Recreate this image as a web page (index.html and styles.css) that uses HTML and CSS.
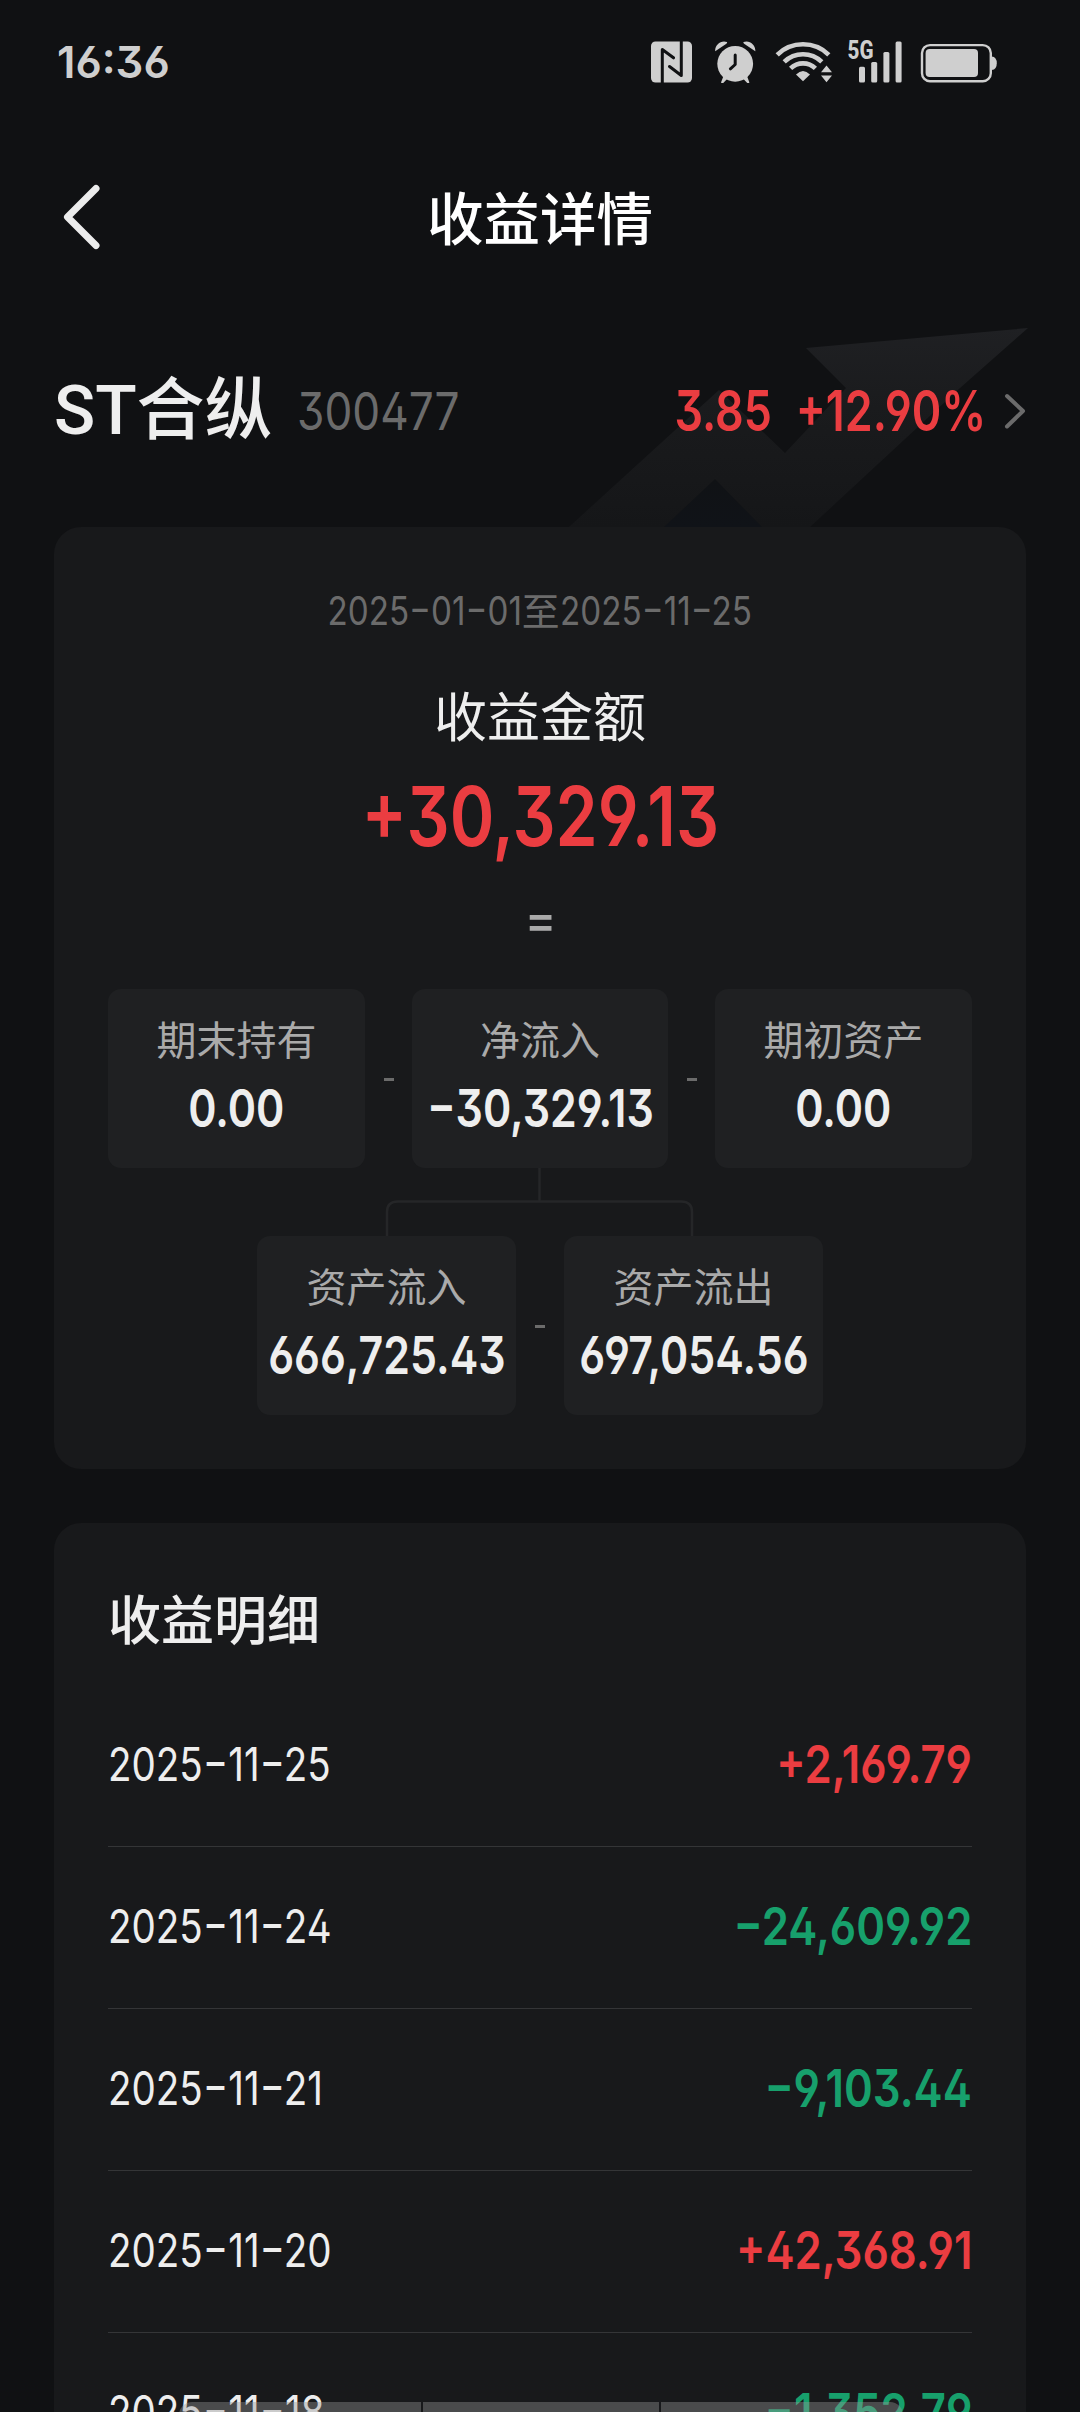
FILE: index.html
```html
<!DOCTYPE html>
<html lang="zh-CN">
<head>
<meta charset="utf-8">
<title>收益详情</title>
<link rel="stylesheet" href="styles.css">
</head>
<body>
<div class="screen">
  <div class="statusbar">
    <span class="num clock">16:36</span>
    <div class="status-icons">
      <svg class="nfc" width="41" height="42" viewBox="651 41 41 42"><rect x="651" y="41.5" width="41" height="41" rx="4.5"/><path class="cut" d="M662.3 84V49.5L673.5 57.8M681.3 40V75.5L669.5 66.5"/></svg>
      <svg class="alarm" width="41" height="42" viewBox="715 41 41 42"><circle cx="735.2" cy="63.8" r="17.9"/><path d="M715.2 51.2C714.6 45 721 39.6 727 42Q727.5 43.2 726 44ZM755.3 51.2C755.9 45 749.5 39.6 743.5 42Q743 43.2 744.5 44ZM723.5 76L721 82.5Q722 83.8 723.5 82.8L728 78ZM747 76L749.4 82.5Q748.4 83.8 747 82.8L742.5 78Z"/><path class="cut" d="M735.2 55V64.5L730.4 68.8"/></svg>
      <svg class="wifi" width="57" height="42" viewBox="775 41 57 42"><g class="arcs"><path d="M777.2 54.8A37 37 0 0 1 828.8 54.8"/><path d="M784.2 61.8A27 27 0 0 1 821.8 61.8"/><path d="M790.6 68.4A17.7 17.7 0 0 1 815.4 68.4"/></g><path d="M803 81.3L796 74.5Q803 67.5 810 74.5Z"/><path d="M826.5 65.5L832 72.2H821ZM826.5 82.3L832 75.6H821Z"/></svg>
      <svg class="signal" width="55" height="42" viewBox="848 41 55 42"><text class="net" x="847.5" y="59" textLength="26" lengthAdjust="spacingAndGlyphs">5G</text><rect x="859" y="66.7" width="6" height="15.8" rx="1.5"/><rect x="871.2" y="62" width="6" height="20.5" rx="1.5"/><rect x="883.4" y="52" width="6" height="30.5" rx="1.5"/><rect x="895.6" y="41.6" width="6" height="40.9" rx="1.5"/></svg>
      <svg class="battery" width="77" height="42" viewBox="920 41 77 42"><rect class="shell" x="922" y="45.1" width="68.8" height="36.2" rx="8"/><rect x="925.6" y="49" width="52.4" height="28" rx="4"/><path d="M991.7 56.5Q996.8 57 996.8 63.3T991.7 70.1Z"/></svg>
    </div>
  </div>

  <header class="navbar">
    <svg class="back" width="40" height="68" viewBox="62 183 40 68"><path d="M96 188.5L67.5 217L96 245.5"/></svg>
    <h1>收益详情</h1>
  </header>

  <section class="stock">
    <svg class="trend" width="480" height="220" viewBox="560 307 480 220">
      <defs>
        <linearGradient id="arrow" x1="0" y1="0" x2="0" y2="1"><stop offset="0" stop-color="#1f2023"/><stop offset=".4" stop-color="#1a1b1d"/><stop offset="1" stop-color="#151618"/></linearGradient>
        <linearGradient id="shade" x1="0" y1="0" x2="0" y2="1"><stop offset="0" stop-color="#101215"/><stop offset="1" stop-color="#101318"/></linearGradient>
      </defs>
      <path fill="url(#shade)" d="M715 479L762 527H664Z"/>
      <path fill="url(#arrow)" d="M1028 328L806 348L846 388L785 453L719 390L569 527H664L715 479L762 527H810L960 388Z"/>
    </svg>
    <span class="name">ST合纵</span>
    <span class="num code">300477</span>
    <span class="num price">3.85</span>
    <span class="num change">+12.90%</span>
    <svg class="more" width="22" height="38" viewBox="1004 393 22 38"><path d="M1007 397L1023 412L1007 427.5"/></svg>
  </section>

  <section class="card summary">
    <div class="range"><span class="num">2025−01−01<span class="to">至</span>2025−11−25</span></div>
    <div class="caption">收益金额</div>
    <div class="total"><span class="num">+30,329.13</span></div>
    <div class="equals">=</div>
    <div class="boxes">
      <div class="box"><span class="label">期末持有</span><span class="num value">0.00</span></div>
      <i class="minus"></i>
      <div class="box"><span class="label">净流入</span><span class="num value">−30,329.13</span></div>
      <i class="minus"></i>
      <div class="box"><span class="label">期初资产</span><span class="num value">0.00</span></div>
    </div>
    <svg class="branch" width="310" height="68" viewBox="0 0 310 68"><path d="M154.5 0V33.5M2 68V44Q2 33.5 13 33.5H296Q307 33.5 307 44V68"/></svg>
    <div class="boxes flows">
      <div class="box"><span class="label">资产流入</span><span class="num value">666,725.43</span></div>
      <i class="minus"></i>
      <div class="box"><span class="label">资产流出</span><span class="num value">697,054.56</span></div>
    </div>
  </section>

  <section class="card details">
    <h2>收益明细</h2>
    <ul>
      <li><span class="num date">2025−11−25</span><span class="num amount up">+2,169.79</span></li>
      <li><span class="num date">2025−11−24</span><span class="num amount down">−24,609.92</span></li>
      <li><span class="num date">2025−11−21</span><span class="num amount down">−9,103.44</span></li>
      <li><span class="num date">2025−11−20</span><span class="num amount up">+42,368.91</span></li>
      <li><span class="num date">2025−11−18</span><span class="num amount down">−1,352.79</span></li>
    </ul>
  </section>

  <div class="gesture"><i></i><i></i><i></i></div>
</div>
</body>
</html>
```

FILE: styles.css
```css
* { box-sizing: border-box; margin: 0; padding: 0; }

body {
  background: #101113;
  color: #eeeeee;
  font-family: "Noto Sans CJK SC", sans-serif;
}

.screen {
  position: relative;
  width: 1080px;
  height: 2412px;
  overflow: hidden;
}

/* Numerals: narrow digits with open 4, 6 and 9 */
.num {
  display: inline-block;
  font-family: Inter, "Noto Sans CJK SC", sans-serif;
  font-feature-settings: "ss01";
  white-space: nowrap;
  transform: scaleX(.83);
}

/* Status bar */
.statusbar {
  display: flex;
  justify-content: space-between;
  align-items: center;
  height: 124px;
  padding: 0 83px 0 57px;
  color: #cfcfcf;
}
.clock {
  font-size: 44px;
  font-weight: 600;
  line-height: 60px;
  transform: scaleX(.99);
  transform-origin: left;
}
.status-icons { display: flex; }
.status-icons svg { fill: #cfcfcf; }
.alarm { margin-left: 23px; }
.wifi { margin-left: 19px; }
.signal { margin-left: 16px; overflow: visible; }
.battery { margin-left: 17px; }
.cut { fill: none; stroke: #101113; stroke-width: 3; stroke-linejoin: round; stroke-linecap: round; }
.arcs { fill: none; stroke: #cfcfcf; stroke-width: 4.6; }
.shell { fill: none; stroke: #cfcfcf; stroke-width: 2.4; }
.net { font: 800 25px Roboto, sans-serif; }

/* Title bar */
.navbar {
  display: grid;
  grid-template-columns: 100px 1fr 100px;
  align-items: center;
  height: 184px;
  padding: 2px 62px 0;
}
.back { fill: none; stroke: #ececec; stroke-width: 7; stroke-linecap: round; stroke-linejoin: round; }
h1 {
  padding-bottom: 4px;
  color: #ffffff;
  font-size: 56.5px;
  font-weight: 500;
  line-height: 80px;
  text-align: center;
}

/* Stock header */
.stock {
  position: relative;
  display: flex;
  align-items: center;
  height: 219px;
  padding: 0 54px 13px;
}
.stock > span { position: relative; }
.trend { position: absolute; right: 40px; bottom: 0; }
.name {
  font-family: Roboto, "Noto Sans CJK SC", sans-serif;
  font-size: 68px;
  font-weight: 500;
  line-height: 90px;
}
.code {
  margin-left: 24px;
  color: #6b6b6b;
  font-size: 52px;
  font-weight: 400;
  transform: scaleX(.85);
  transform-origin: left;
}
.price, .change {
  color: #eb3d41;
  font-size: 56px;
  font-weight: 600;
  transform: scaleX(.8);
  transform-origin: right;
}
.price { margin-left: auto; }
.change { margin-left: -24px; }
.more { margin-left: 18px; fill: none; stroke: #6b6b6b; stroke-width: 4; stroke-linecap: round; stroke-linejoin: round; }

/* Cards */
.card {
  margin: 0 54px;
  padding: 0 54px;
  border-radius: 27px;
  background: #18191b;
}
.summary {
  display: flex;
  flex-direction: column;
  align-items: center;
  height: 942px;
  padding-top: 59px;
}
.range {
  display: flex;
  align-items: center;
  height: 50px;
  color: #6b6b6b;
  font-size: 40px;
  line-height: 50px;
}
.to {
  display: inline-block;
  padding: 0 4px;
  font-size: 38px;
  line-height: 40px;
  transform: scaleX(1.2);
}
.caption { margin-top: 43px; font-size: 53px; line-height: 70px; }
.total {
  display: flex;
  align-items: center;
  height: 90px;
  margin-top: 22px;
  color: #eb3d41;
  font-size: 83px;
  font-weight: 600;
  line-height: 90px;
}
.total .num { transform: scaleX(.815); }
.equals {
  margin: 38px 0 4px 2px;
  color: #aaaaaa;
  font: 500 50px/40px Inter, sans-serif;
  transform: scaleX(.95);
}

.boxes {
  display: grid;
  grid-template-columns: 257px 1fr 256px 1fr 257px;
  align-items: center;
  justify-items: center;
  width: 100%;
  margin-top: 46px;
}
.flows {
  grid-template-columns: 259px 48px 259px;
  justify-content: center;
  margin-top: 0;
}
.box {
  display: flex;
  flex-direction: column;
  align-items: center;
  width: 100%;
  height: 179px;
  padding-top: 24px;
  border-radius: 13px;
  background: #1f2022;
}
.label { color: #aaaaaa; font-size: 40px; line-height: 50px; }
.value {
  margin-top: 16px;
  font-size: 52px;
  font-weight: 600;
  line-height: 60px;
  transform: scaleX(.825);
}
.minus { width: 10px; height: 3px; margin-top: 2px; background: #6b6b6b; }
.branch { display: block; fill: none; stroke: #252628; stroke-width: 2.5; }

/* Daily details */
.details {
  height: 1000px;
  margin-top: 54px;
  padding-top: 54px;
}
h2 { font-size: 53px; font-weight: 500; line-height: 80px; }
ul { margin-top: 28px; list-style: none; }
li {
  display: flex;
  justify-content: space-between;
  align-items: center;
  height: 162px;
  padding-bottom: 3px;
  border-bottom: 1px solid #343537;
}
.date { margin-bottom: 2px; font-size: 47px; font-weight: 400; transform: scaleX(.82); transform-origin: left; }
.amount { font-size: 52px; font-weight: 600; transform: scaleX(.84); transform-origin: right; }
.up { color: #eb3d41; }
.down { color: #17a06c; }

/* System gesture strip over the list */
.gesture {
  position: absolute;
  left: 179px;
  bottom: -16px;
  display: grid;
  grid-template-columns: 242px 1fr 242px;
  gap: 2px;
  width: 724px;
  height: 26px;
  border-radius: 13px;
  overflow: hidden;
}
.gesture i { background: rgba(151, 151, 151, .4); }
```
